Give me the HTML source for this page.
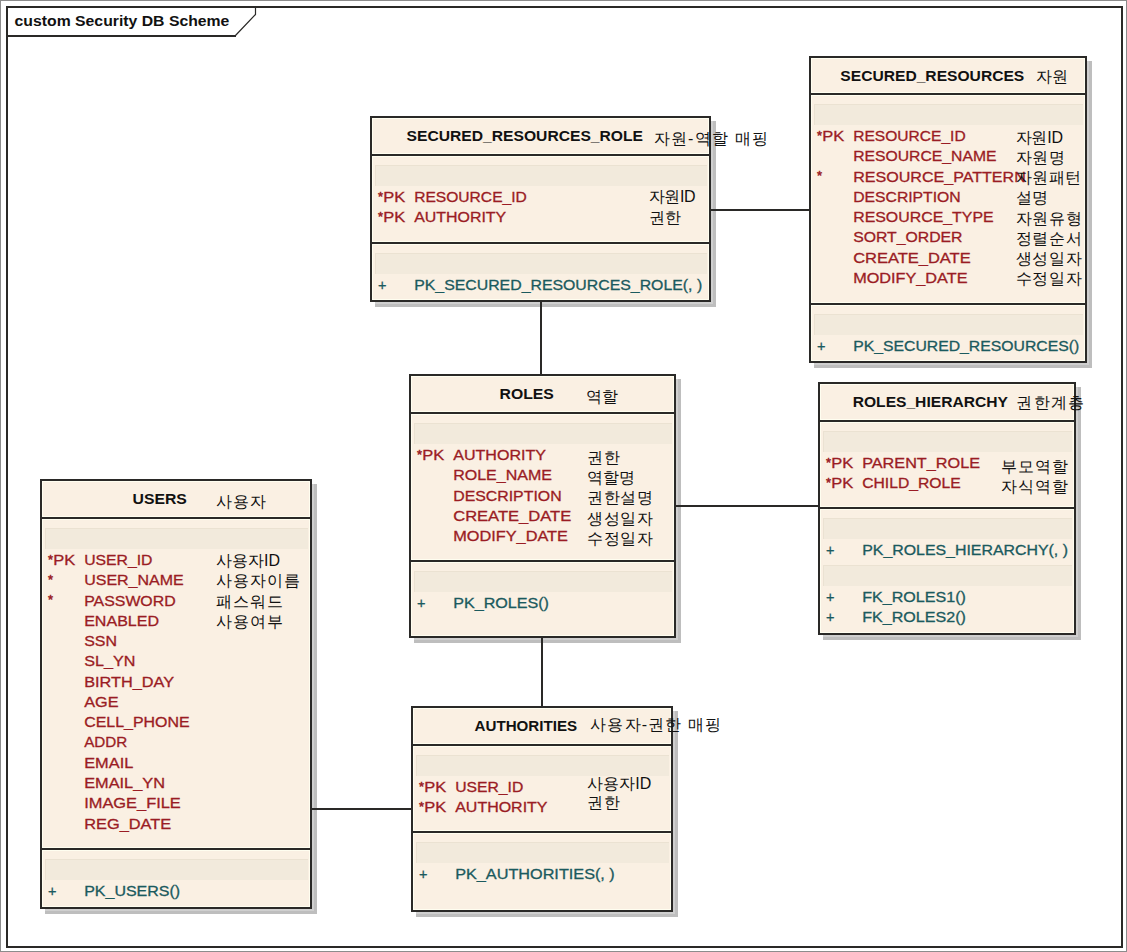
<!DOCTYPE html>
<html><head><meta charset="utf-8"><style>
html,body{margin:0;padding:0;background:#fff;}
svg{display:block;}
text{font-family:"Liberation Sans",sans-serif;}
.tt{font-size:14.5px;font-weight:bold;fill:#111;}
.ti{font-size:15px;font-weight:bold;fill:#111;}
.a{font-size:14.5px;fill:#9A1C24;stroke:#9A1C24;stroke-width:0.3px;}
.st{font-size:13px;fill:#9A1C24;stroke:#9A1C24;stroke-width:0.5px;}
.o{font-size:14.5px;fill:#1B5A5E;stroke:#1B5A5E;stroke-width:0.3px;}
.k{font-size:16px;fill:#111;}
</style></head><body>
<svg width="1127" height="952" viewBox="0 0 1127 952" shape-rendering="crispEdges">
<rect x="0" y="0" width="1127" height="952" fill="#8C8C8C"/>
<rect x="1" y="1" width="1125" height="950" fill="#FFFFFF"/>
<rect x="6" y="6" width="1117" height="942" fill="#2A2927"/>
<rect x="8" y="8" width="1113" height="938" fill="#FFFFFF"/>
<rect x="6" y="35" width="230" height="2" fill="#2A2927"/>
<polyline points="235,36 255.5,14.5 255.5,7" fill="none" stroke="#2A2927" stroke-width="1.2" shape-rendering="geometricPrecision"/>
<text x="14.6" y="26" class="tt" textLength="214.8" lengthAdjust="spacingAndGlyphs">custom Security DB Scheme</text>
<rect x="375" y="121" width="341" height="186" fill="#BEBEBE"/>
<rect x="375" y="121" width="338" height="183" fill="#CFCFCF"/>
<rect x="370" y="116" width="341" height="186" fill="#2A2927"/>
<rect x="372" y="118" width="337" height="36" fill="#FFFEF0"/>
<rect x="373" y="119" width="335" height="34" fill="#FAF0E3"/>
<rect x="372" y="156" width="337" height="86" fill="#FFFEF0"/>
<rect x="373" y="157" width="335" height="84" fill="#FAF0E3"/>
<rect x="372" y="244" width="337" height="56" fill="#FFFEF0"/>
<rect x="373" y="245" width="335" height="54" fill="#FAF0E3"/>
<text x="406.6" y="141" class="ti" textLength="236.4" lengthAdjust="spacingAndGlyphs">SECURED_RESOURCES_ROLE</text>
<text x="653.7" y="143.7" class="k" textLength="114.0" lengthAdjust="spacing">자원-역할 매핑</text>
<rect x="375" y="165" width="332" height="21" fill="#EBE2D2"/>
<rect x="376" y="166" width="331" height="20" fill="#F2EADC"/>
<text x="378" y="200.5" class="st">*</text>
<text x="383.3" y="202.0" class="a" textLength="22" lengthAdjust="spacingAndGlyphs">PK</text>
<text x="414.2" y="202.0" class="a" textLength="112.6" lengthAdjust="spacingAndGlyphs">RESOURCE_ID</text>
<text x="648.8" y="202.3" class="k" textLength="46.7" lengthAdjust="spacing">자원ID</text>
<text x="378" y="220.77" class="st">*</text>
<text x="383.3" y="222.27" class="a" textLength="22" lengthAdjust="spacingAndGlyphs">PK</text>
<text x="414.2" y="222.27" class="a" textLength="92" lengthAdjust="spacingAndGlyphs">AUTHORITY</text>
<text x="648.8" y="223.27" class="k" textLength="32.6" lengthAdjust="spacing">권한</text>
<rect x="375" y="253" width="332" height="21" fill="#EBE2D2"/>
<rect x="376" y="254" width="331" height="20" fill="#F2EADC"/>
<text x="378" y="290.0" class="o">+</text>
<text x="414.2" y="290.0" class="o" textLength="288" lengthAdjust="spacingAndGlyphs">PK_SECURED_RESOURCES_ROLE(, )</text>
<rect x="814" y="61" width="278" height="307" fill="#BEBEBE"/>
<rect x="814" y="61" width="275" height="304" fill="#CFCFCF"/>
<rect x="809" y="56" width="278" height="307" fill="#2A2927"/>
<rect x="811" y="58" width="274" height="35" fill="#FFFEF0"/>
<rect x="812" y="59" width="272" height="33" fill="#FAF0E3"/>
<rect x="811" y="95" width="274" height="208" fill="#FFFEF0"/>
<rect x="812" y="96" width="272" height="206" fill="#FAF0E3"/>
<rect x="811" y="305" width="274" height="56" fill="#FFFEF0"/>
<rect x="812" y="306" width="272" height="54" fill="#FAF0E3"/>
<text x="840.3" y="81" class="ti" textLength="184" lengthAdjust="spacingAndGlyphs">SECURED_RESOURCES</text>
<text x="1035.6" y="81.9" class="k" textLength="32.3" lengthAdjust="spacing">자원</text>
<rect x="814" y="104" width="269" height="21" fill="#EBE2D2"/>
<rect x="815" y="105" width="268" height="20" fill="#F2EADC"/>
<text x="817" y="139.5" class="st">*</text>
<text x="822.3" y="141.0" class="a" textLength="22" lengthAdjust="spacingAndGlyphs">PK</text>
<text x="853.2" y="141.0" class="a" textLength="112.5" lengthAdjust="spacingAndGlyphs">RESOURCE_ID</text>
<text x="1015.7" y="142.5" class="k" textLength="47.3" lengthAdjust="spacing">자원ID</text>
<text x="853.2" y="161.27" class="a" textLength="143.3" lengthAdjust="spacingAndGlyphs">RESOURCE_NAME</text>
<text x="1015.7" y="162.77" class="k" textLength="49.3" lengthAdjust="spacing">자원명</text>
<text x="817" y="180.04" class="st">*</text>
<text x="853.2" y="181.54" class="a" textLength="172.6" lengthAdjust="spacingAndGlyphs">RESOURCE_PATTERN</text>
<text x="1015.7" y="183.04" class="k" textLength="65.4" lengthAdjust="spacing">자원패턴</text>
<text x="853.2" y="201.81" class="a" textLength="107.5" lengthAdjust="spacingAndGlyphs">DESCRIPTION</text>
<text x="1015.7" y="203.31" class="k" textLength="32.4" lengthAdjust="spacing">설명</text>
<text x="853.2" y="222.08" class="a" textLength="140.4" lengthAdjust="spacingAndGlyphs">RESOURCE_TYPE</text>
<text x="1015.7" y="223.58" class="k" textLength="65.9" lengthAdjust="spacing">자원유형</text>
<text x="853.2" y="242.35" class="a" textLength="109.3" lengthAdjust="spacingAndGlyphs">SORT_ORDER</text>
<text x="1015.7" y="243.85" class="k" textLength="65.9" lengthAdjust="spacing">정렬순서</text>
<text x="853.2" y="262.62" class="a" textLength="117.5" lengthAdjust="spacingAndGlyphs">CREATE_DATE</text>
<text x="1015.7" y="264.12" class="k" textLength="65.9" lengthAdjust="spacing">생성일자</text>
<text x="853.2" y="282.89" class="a" textLength="114.3" lengthAdjust="spacingAndGlyphs">MODIFY_DATE</text>
<text x="1015.7" y="284.39" class="k" textLength="65.9" lengthAdjust="spacing">수정일자</text>
<rect x="814" y="314" width="269" height="21" fill="#EBE2D2"/>
<rect x="815" y="315" width="268" height="20" fill="#F2EADC"/>
<text x="817" y="351.0" class="o">+</text>
<text x="853.2" y="351.0" class="o" textLength="226" lengthAdjust="spacingAndGlyphs">PK_SECURED_RESOURCES()</text>
<rect x="414" y="379" width="267" height="264" fill="#BEBEBE"/>
<rect x="414" y="379" width="264" height="261" fill="#CFCFCF"/>
<rect x="409" y="374" width="267" height="264" fill="#2A2927"/>
<rect x="411" y="376" width="263" height="36" fill="#FFFEF0"/>
<rect x="412" y="377" width="261" height="34" fill="#FAF0E3"/>
<rect x="411" y="414" width="263" height="146" fill="#FFFEF0"/>
<rect x="412" y="415" width="261" height="144" fill="#FAF0E3"/>
<rect x="411" y="562" width="263" height="74" fill="#FFFEF0"/>
<rect x="412" y="563" width="261" height="72" fill="#FAF0E3"/>
<text x="499.5" y="399" class="ti" textLength="54.3" lengthAdjust="spacingAndGlyphs">ROLES</text>
<text x="585.5" y="402.3" class="k" textLength="32.1" lengthAdjust="spacing">역할</text>
<rect x="414" y="423" width="258" height="21" fill="#EBE2D2"/>
<rect x="415" y="424" width="257" height="20" fill="#F2EADC"/>
<text x="417" y="458.5" class="st">*</text>
<text x="422.3" y="460.0" class="a" textLength="22" lengthAdjust="spacingAndGlyphs">PK</text>
<text x="453.2" y="460.0" class="a" textLength="92.8" lengthAdjust="spacingAndGlyphs">AUTHORITY</text>
<text x="586.8" y="462.8" class="k" textLength="32.8" lengthAdjust="spacing">권한</text>
<text x="453.2" y="480.27" class="a" textLength="98.8" lengthAdjust="spacingAndGlyphs">ROLE_NAME</text>
<text x="586.8" y="483.07" class="k" textLength="48.5" lengthAdjust="spacing">역할명</text>
<text x="453.2" y="500.54" class="a" textLength="108.4" lengthAdjust="spacingAndGlyphs">DESCRIPTION</text>
<text x="586.8" y="503.34" class="k" textLength="66.1" lengthAdjust="spacing">권한설명</text>
<text x="453.2" y="520.81" class="a" textLength="118" lengthAdjust="spacingAndGlyphs">CREATE_DATE</text>
<text x="586.8" y="523.61" class="k" textLength="66.1" lengthAdjust="spacing">생성일자</text>
<text x="453.2" y="541.08" class="a" textLength="114.7" lengthAdjust="spacingAndGlyphs">MODIFY_DATE</text>
<text x="586.8" y="543.88" class="k" textLength="66.1" lengthAdjust="spacing">수정일자</text>
<rect x="414" y="571" width="258" height="21" fill="#EBE2D2"/>
<rect x="415" y="572" width="257" height="20" fill="#F2EADC"/>
<text x="417" y="608.0" class="o">+</text>
<text x="453.2" y="608.0" class="o" textLength="95.8" lengthAdjust="spacingAndGlyphs">PK_ROLES()</text>
<rect x="823" y="387" width="258" height="253" fill="#BEBEBE"/>
<rect x="823" y="387" width="255" height="250" fill="#CFCFCF"/>
<rect x="818" y="382" width="258" height="253" fill="#2A2927"/>
<rect x="820" y="384" width="254" height="36" fill="#FFFEF0"/>
<rect x="821" y="385" width="252" height="34" fill="#FAF0E3"/>
<rect x="820" y="422" width="254" height="85" fill="#FFFEF0"/>
<rect x="821" y="423" width="252" height="83" fill="#FAF0E3"/>
<rect x="820" y="509" width="254" height="124" fill="#FFFEF0"/>
<rect x="821" y="510" width="252" height="122" fill="#FAF0E3"/>
<text x="852.7" y="407" class="ti" textLength="155.2" lengthAdjust="spacingAndGlyphs">ROLES_HIERARCHY</text>
<text x="1016.4" y="408.3" class="k" textLength="67.5" lengthAdjust="spacing">권한계층</text>
<rect x="823" y="431" width="249" height="21" fill="#EBE2D2"/>
<rect x="824" y="432" width="248" height="20" fill="#F2EADC"/>
<text x="826" y="466.5" class="st">*</text>
<text x="831.3" y="468.0" class="a" textLength="22" lengthAdjust="spacingAndGlyphs">PK</text>
<text x="862.2" y="468.0" class="a" textLength="117.8" lengthAdjust="spacingAndGlyphs">PARENT_ROLE</text>
<text x="1001.0" y="471.9" class="k" textLength="67.4" lengthAdjust="spacing">부모역할</text>
<text x="826" y="486.77" class="st">*</text>
<text x="831.3" y="488.27" class="a" textLength="22" lengthAdjust="spacingAndGlyphs">PK</text>
<text x="862.2" y="488.27" class="a" textLength="98.5" lengthAdjust="spacingAndGlyphs">CHILD_ROLE</text>
<text x="1001.0" y="492.17" class="k" textLength="67.4" lengthAdjust="spacing">자식역할</text>
<rect x="823" y="518" width="249" height="21" fill="#EBE2D2"/>
<rect x="824" y="519" width="248" height="20" fill="#F2EADC"/>
<text x="826" y="555.0" class="o">+</text>
<text x="862.2" y="555.0" class="o" textLength="205.8" lengthAdjust="spacingAndGlyphs">PK_ROLES_HIERARCHY(, )</text>
<rect x="823" y="564.5" width="249" height="21" fill="#EBE2D2"/>
<rect x="824" y="565.5" width="248" height="20" fill="#F2EADC"/>
<text x="826" y="601.5" class="o">+</text>
<text x="862.2" y="601.5" class="o" textLength="103.7" lengthAdjust="spacingAndGlyphs">FK_ROLES1()</text>
<text x="826" y="621.77" class="o">+</text>
<text x="862.2" y="621.77" class="o" textLength="103.7" lengthAdjust="spacingAndGlyphs">FK_ROLES2()</text>
<rect x="45" y="484" width="272" height="430" fill="#BEBEBE"/>
<rect x="45" y="484" width="269" height="427" fill="#CFCFCF"/>
<rect x="40" y="479" width="272" height="430" fill="#2A2927"/>
<rect x="42" y="481" width="268" height="36" fill="#FFFEF0"/>
<rect x="43" y="482" width="266" height="34" fill="#FAF0E3"/>
<rect x="42" y="519" width="268" height="329" fill="#FFFEF0"/>
<rect x="43" y="520" width="266" height="327" fill="#FAF0E3"/>
<rect x="42" y="850" width="268" height="57" fill="#FFFEF0"/>
<rect x="43" y="851" width="266" height="55" fill="#FAF0E3"/>
<text x="132.6" y="504" class="ti" textLength="54.3" lengthAdjust="spacingAndGlyphs">USERS</text>
<text x="215.9" y="507.3" class="k" textLength="49.7" lengthAdjust="spacing">사용자</text>
<rect x="45" y="528" width="263" height="21" fill="#EBE2D2"/>
<rect x="46" y="529" width="262" height="20" fill="#F2EADC"/>
<text x="48" y="563.5" class="st">*</text>
<text x="53.3" y="565.0" class="a" textLength="22" lengthAdjust="spacingAndGlyphs">PK</text>
<text x="84.2" y="565.0" class="a" textLength="68.3" lengthAdjust="spacingAndGlyphs">USER_ID</text>
<text x="215.9" y="566.0" class="k" textLength="64.1" lengthAdjust="spacing">사용자ID</text>
<text x="48" y="583.77" class="st">*</text>
<text x="84.2" y="585.27" class="a" textLength="99.5" lengthAdjust="spacingAndGlyphs">USER_NAME</text>
<text x="215.9" y="586.27" class="k" textLength="84.4" lengthAdjust="spacing">사용자이름</text>
<text x="48" y="604.04" class="st">*</text>
<text x="84.2" y="605.54" class="a" textLength="91.5" lengthAdjust="spacingAndGlyphs">PASSWORD</text>
<text x="215.9" y="606.54" class="k" textLength="66.9" lengthAdjust="spacing">패스워드</text>
<text x="84.2" y="625.81" class="a" textLength="74.8" lengthAdjust="spacingAndGlyphs">ENABLED</text>
<text x="215.9" y="626.81" class="k" textLength="66.9" lengthAdjust="spacing">사용여부</text>
<text x="84.2" y="646.08" class="a" textLength="32.8" lengthAdjust="spacingAndGlyphs">SSN</text>
<text x="84.2" y="666.35" class="a" textLength="51.1" lengthAdjust="spacingAndGlyphs">SL_YN</text>
<text x="84.2" y="686.62" class="a" textLength="89.9" lengthAdjust="spacingAndGlyphs">BIRTH_DAY</text>
<text x="84.2" y="706.89" class="a" textLength="34.3" lengthAdjust="spacingAndGlyphs">AGE</text>
<text x="84.2" y="727.16" class="a" textLength="105.4" lengthAdjust="spacingAndGlyphs">CELL_PHONE</text>
<text x="84.2" y="747.43" class="a" textLength="43.1" lengthAdjust="spacingAndGlyphs">ADDR</text>
<text x="84.2" y="767.7" class="a" textLength="49.1" lengthAdjust="spacingAndGlyphs">EMAIL</text>
<text x="84.2" y="787.97" class="a" textLength="80.8" lengthAdjust="spacingAndGlyphs">EMAIL_YN</text>
<text x="84.2" y="808.24" class="a" textLength="96.6" lengthAdjust="spacingAndGlyphs">IMAGE_FILE</text>
<text x="84.2" y="828.51" class="a" textLength="87" lengthAdjust="spacingAndGlyphs">REG_DATE</text>
<rect x="45" y="859" width="263" height="21" fill="#EBE2D2"/>
<rect x="46" y="860" width="262" height="20" fill="#F2EADC"/>
<text x="48" y="896.0" class="o">+</text>
<text x="84.2" y="896.0" class="o" textLength="95.9" lengthAdjust="spacingAndGlyphs">PK_USERS()</text>
<rect x="416" y="711" width="262" height="206" fill="#BEBEBE"/>
<rect x="416" y="711" width="259" height="203" fill="#CFCFCF"/>
<rect x="411" y="706" width="262" height="206" fill="#2A2927"/>
<rect x="413" y="708" width="258" height="36" fill="#FFFEF0"/>
<rect x="414" y="709" width="256" height="34" fill="#FAF0E3"/>
<rect x="413" y="746" width="258" height="85" fill="#FFFEF0"/>
<rect x="414" y="747" width="256" height="83" fill="#FAF0E3"/>
<rect x="413" y="833" width="258" height="77" fill="#FFFEF0"/>
<rect x="414" y="834" width="256" height="75" fill="#FAF0E3"/>
<text x="474.5" y="731" class="ti" textLength="102.7" lengthAdjust="spacingAndGlyphs">AUTHORITIES</text>
<text x="590.4" y="729.6" class="k" textLength="130.5" lengthAdjust="spacing">사용자-권한 매핑</text>
<rect x="416" y="755" width="253" height="21" fill="#EBE2D2"/>
<rect x="417" y="756" width="252" height="20" fill="#F2EADC"/>
<text x="419" y="790.5" class="st">*</text>
<text x="424.3" y="792.0" class="a" textLength="22" lengthAdjust="spacingAndGlyphs">PK</text>
<text x="455.2" y="792.0" class="a" textLength="68.1" lengthAdjust="spacingAndGlyphs">USER_ID</text>
<text x="587.0" y="788.6" class="k" textLength="64.3" lengthAdjust="spacing">사용자ID</text>
<text x="419" y="810.77" class="st">*</text>
<text x="424.3" y="812.27" class="a" textLength="22" lengthAdjust="spacingAndGlyphs">PK</text>
<text x="455.2" y="812.27" class="a" textLength="92.3" lengthAdjust="spacingAndGlyphs">AUTHORITY</text>
<text x="587.0" y="808.07" class="k" textLength="32.8" lengthAdjust="spacing">권한</text>
<rect x="416" y="842" width="253" height="21" fill="#EBE2D2"/>
<rect x="417" y="843" width="252" height="20" fill="#F2EADC"/>
<text x="419" y="879.0" class="o">+</text>
<text x="455.2" y="879.0" class="o" textLength="159.6" lengthAdjust="spacingAndGlyphs">PK_AUTHORITIES(, )</text>
<rect x="711" y="209" width="98" height="2" fill="#2A2927"/>
<rect x="540" y="302" width="2" height="72" fill="#2A2927"/>
<rect x="676" y="505" width="142" height="2" fill="#2A2927"/>
<rect x="541" y="638" width="2" height="68" fill="#2A2927"/>
<rect x="312" y="808" width="99" height="2" fill="#2A2927"/>
</svg></body></html>
